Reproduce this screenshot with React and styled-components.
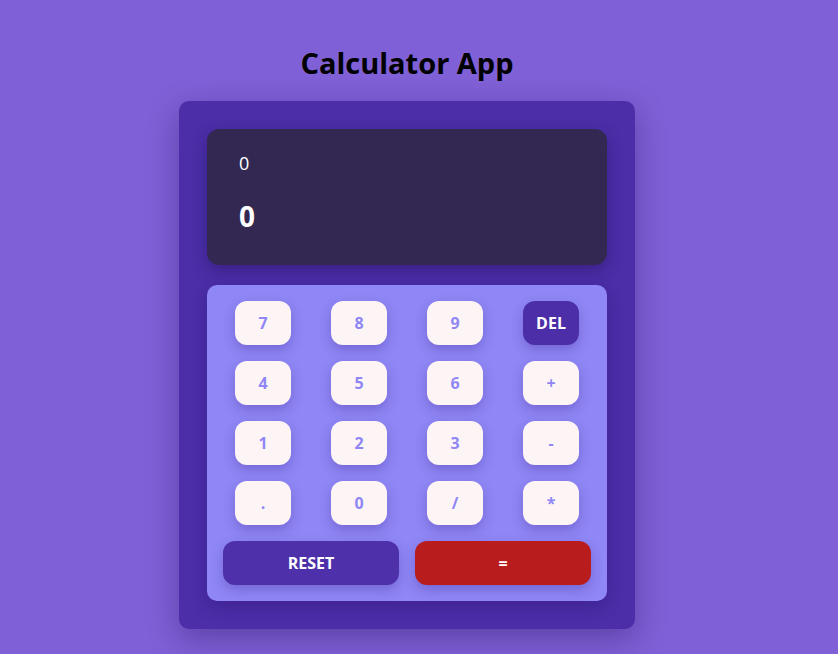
import React from "react";
import styled, { createGlobalStyle } from "styled-components";

const Global = createGlobalStyle`
  html, body { margin: 0; padding: 0; }
  body {
    background: #7f60d6;
    font-family: "Open Sans", "Noto Sans", sans-serif;
    min-height: 654px;
    overflow: hidden;
  }
`;

const Page = styled.div`
  width: 814px;
  display: flex;
  flex-direction: column;
  align-items: center;
  padding-top: 44px;
`;

const Title = styled.h1`
  margin: 0 0 20px;
  font-size: 29px;
  line-height: 37px;
  font-weight: 700;
  color: #000;
`;

const Calculator = styled.div`
  width: 400px;
  padding: 28px;
  background: #4b2ea8;
  border-radius: 10px;
  box-shadow: 0 10px 30px rgba(30, 10, 80, 0.35);
  display: flex;
  flex-direction: column;
  gap: 20px;
`;

const Display = styled.div`
  height: 136px;
  box-sizing: border-box;
  padding: 20px 32px;
  background: #332852;
  border-radius: 12px;
  box-shadow: 0 6px 16px rgba(20, 0, 60, 0.3);
  color: #fff;
  display: flex;
  flex-direction: column;
`;

const Previous = styled.div`
  font-size: 18px;
  line-height: 26px;
  margin-top: 1px;
`;

const Current = styled.div`
  font-size: 28px;
  font-weight: 700;
  line-height: 38px;
  margin-top: 21px;
`;

const Keypad = styled.div`
  padding: 16px;
  background: #8f87f5;
  border-radius: 10px;
  box-shadow: 0 6px 16px rgba(40, 10, 100, 0.3);
  display: grid;
  grid-template-columns: repeat(4, 80px);
  grid-auto-rows: 44px;
  gap: 16px;
`;

const Key = styled.button`
  justify-self: center;
  width: ${(p) => (p.$wide ? "176px" : "56px")};
  grid-column: ${(p) => (p.$wide ? "span 2" : "auto")};
  height: 44px;
  border: none;
  border-radius: 12px;
  background: ${(p) => p.$bg || "#fdf5f5"};
  color: ${(p) => p.$color || "#8f87f5"};
  font-family: "Open Sans", "Noto Sans", sans-serif;
  font-size: 16px;
  font-weight: 700;
  box-shadow: 0 5px 12px rgba(60, 30, 140, 0.3);
  cursor: pointer;
  padding: 0;
`;

const keys = ["7", "8", "9", "DEL", "4", "5", "6", "+", "1", "2", "3", "-", ".", "0", "/", "*"];

export default function App() {
  return (
    <>
      <Global />
      <Page>
        <Title>Calculator App</Title>
        <Calculator>
          <Display>
            <Previous>0</Previous>
            <Current>0</Current>
          </Display>
          <Keypad>
            {keys.map((k) =>
              k === "DEL" ? (
                <Key key={k} $bg="#4b2ea8" $color="#fff">{k}</Key>
              ) : (
                <Key key={k}>{k}</Key>
              )
            )}
            <Key $wide $bg="#4e30aa" $color="#fff">RESET</Key>
            <Key $wide $bg="#b91c1c" $color="#fff">=</Key>
          </Keypad>
        </Calculator>
      </Page>
    </>
  );
}
